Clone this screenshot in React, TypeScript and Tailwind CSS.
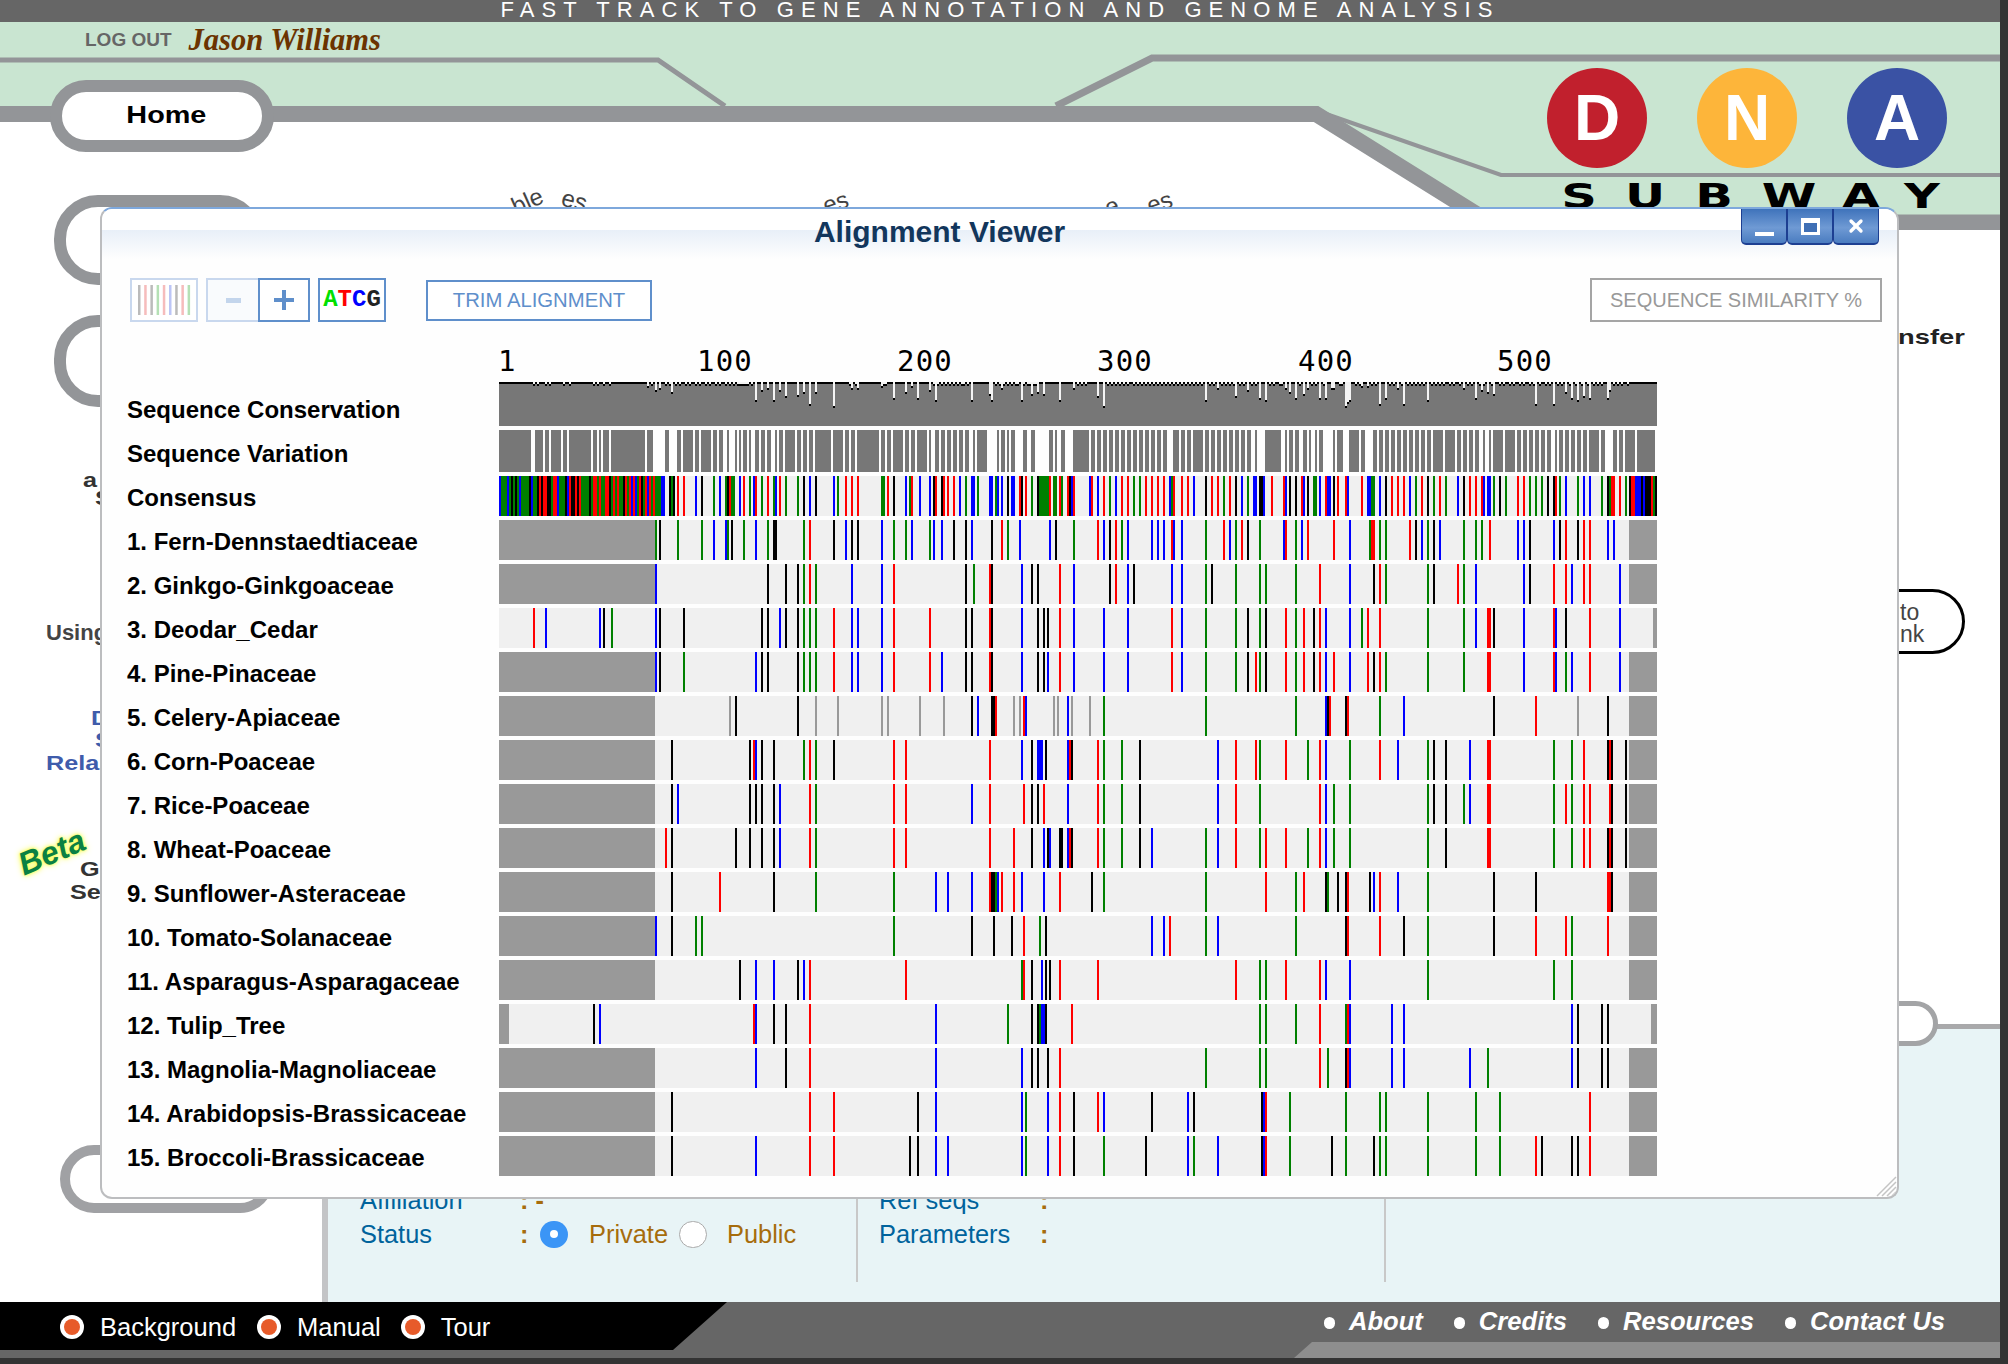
import { X } from "lucide-react";

const SANS = "font-['Liberation_Sans',Arial,sans-serif]";

const COLORS: Record<string, string> = { r: "#ff0000", g: "#008000", b: "#0000ff", k: "#000000", a: "#999999" };

const LABELS = [
  "Sequence Conservation",
  "Sequence Variation",
  "Consensus",
  "1. Fern-Dennstaedtiaceae",
  "2. Ginkgo-Ginkgoaceae",
  "3. Deodar_Cedar",
  "4. Pine-Pinaceae",
  "5. Celery-Apiaceae",
  "6. Corn-Poaceae",
  "7. Rice-Poaceae",
  "8. Wheat-Poaceae",
  "9. Sunflower-Asteraceae",
  "10. Tomato-Solanaceae",
  "11. Asparagus-Asparagaceae",
  "12. Tulip_Tree",
  "13. Magnolia-Magnoliaceae",
  "14. Arabidopsis-Brassicaceae",
  "15. Broccoli-Brassicaceae",
];

// one entry per species: gray columns at each end, then colored columns
const ROWS: { left: number; right: number; bars: string }[] = [
  { left: 78, right: 565, bars: "g78 k80 g89 g101 b107 b113 g114 k116 g122 b128 g134 k137 k138 g152 r155 k167 b173 k176 k179 b191 g197 g203 b206 g215 b217 b221 k227 k233 b236 k246 r251 g254 b260 b275 k278 g287 r299 b302 k305 r308 g311 b314 b326 b329 b332 r336 b337 b341 g353 r362 b365 g368 r371 k374 g380 b392 r393 g398 b401 r404 r417 b425 g435 r436 r437 g440 g443 r455 k458 b461 g464 k467 b470 g482 g488 g491 r495 b509 b512 k515 b527 k530 r533 k539 r542 r545 b554 b557" },
  { left: 78, right: 565, bars: "b78 k134 k143 k149 g152 r155 g158 b176 b191 r197 k233 g237 r245 k246 b261 k266 k269 r280 b287 k305 r308 b314 k317 b336 b341 g353 k356 g368 g380 g383 g398 r410 b425 k437 r440 g443 g464 k467 r479 g482 b488 b512 k515 r527 r533 b536 r542 r545 b560" },
  { left: 0, right: 577, bars: "r17 b23 b50 k52 g56 b78 k80 k92 k131 k134 b140 k143 k149 g152 g155 g158 r167 b176 b179 b191 r197 r215 k233 k236 r245 k246 b261 k269 k272 k274 r280 b287 b302 b314 r336 b341 g353 g368 k374 g380 k383 r393 g398 r402 k407 r410 b413 b425 g431 r434 r440 g464 g482 b488 r494 r495 k497 b512 r527 b528 k533 r545 b560" },
  { left: 78, right: 565, bars: "b78 k80 g92 b128 k131 k134 k149 g152 g155 g158 r167 b176 b179 b191 r197 r215 b221 k233 k236 r245 k246 b261 k269 k272 b274 r280 b287 b302 b314 r336 b341 g353 g368 k374 r378 g380 k383 r393 g398 r402 k407 r410 b413 r417 b425 r434 k437 r440 g443 g464 g482 r494 r495 b512 r527 b528 g533 b536 r545 b560" },
  { left: 78, right: 565, bars: "a115 k118 k149 a158 a169 a191 a194 a210 a222 k236 b239 k246 k247 r248 a257 a260 r262 b263 a277 a279 b284 a286 a295 g302 g353 g398 b413 k414 r415 k423 r424 g440 b452 k497 r518 a539 k554" },
  { left: 78, right: 565, bars: "k86 k125 r127 b128 k131 k137 g152 r155 g158 k167 r197 r203 r245 b261 k266 b269 b270 b271 k273 b284 r285 k286 r299 g302 g311 k320 b359 r368 r378 g380 r393 g404 r410 b413 g425 r440 b449 g464 k467 k473 b485 r494 r495 g527 g536 r542 k554 r555 k556 k563" },
  { left: 78, right: 565, bars: "k86 b89 k125 k128 k131 k137 b140 r155 g158 r197 r203 b236 r245 r262 k266 k269 r272 b284 r299 g302 g311 k320 b359 r368 g380 r410 b413 g417 g425 g464 k467 k473 g482 b485 r494 r495 g527 r533 g536 r542 r545 r555 k556 k563" },
  { left: 78, right: 565, bars: "r83 k86 k118 k125 k131 k137 b140 r155 g158 r197 r203 r245 r257 k266 b272 k274 b275 k280 k281 b284 r285 k286 r299 g302 g311 k320 b326 g353 b359 r368 g380 r383 r393 g404 r410 b413 g417 g425 g464 k473 r494 r495 g527 g536 r542 r545 k554 r555 k556 k563" },
  { left: 78, right: 565, bars: "k86 r110 k137 g158 g197 b218 b224 b236 r245 k246 k247 g248 b249 r251 r257 b261 b272 r280 k296 g302 g353 r383 g398 r402 k413 g414 k419 k423 r424 k435 b437 r440 b449 g464 k497 k518 r554 r555 k556" },
  { left: 78, right: 565, bars: "b78 k86 g98 g101 g197 k236 k247 k256 r262 g270 k273 b326 b332 r335 g353 b359 g398 k423 r424 r440 k452 g464 k497 r518 r533 g536 r554" },
  { left: 78, right: 565, bars: "k120 b128 b137 k149 b152 r155 r203 g261 r262 k266 b271 k273 k275 r280 r299 r368 g380 g383 r393 r410 b413 b425 g464 g527 g536" },
  { left: 5, right: 576, bars: "k47 b50 r127 b128 k137 k143 r155 b218 g254 k266 k269 g270 b271 b272 k273 r286 g380 g383 g398 r410 g423 r424 b425 b446 b452 b536 k539 k551 k554" },
  { left: 78, right: 565, bars: "b128 k143 r155 b218 b261 k266 k269 k274 r280 g353 g380 g383 r410 g414 k423 r424 b425 b446 b452 b485 g494 b536 k539 k551 k554" },
  { left: 78, right: 565, bars: "k86 r155 r167 k209 b218 b261 g263 b274 r280 k287 r299 b302 k326 b344 k347 k381 b382 r383 g395 g423 g440 g443 g464 g488 g500 r545" },
  { left: 78, right: 565, bars: "k86 b128 r155 r167 k205 k209 b218 b224 b261 g263 b274 r280 k287 g302 k323 b344 g347 b359 k381 b382 r383 g395 k416 g423 k437 g440 g443 g464 g488 g500 r518 k521 k536 k539 r545" },
];

const CONSENSUS_HEAD = "bgggbgkgkgbggggkbggkrkrrkkgrrbgggkbrkkrkrggggkgrrgrggrrkgrgrggkrgrbrbgrkgrbrgrgggbb";
const CONSENSUS = "k85 g86 k87 r89 r92 b98 k101 g107 b110 g113 k114 r115 g116 g117 b120 r122 g125 b127 r128 g131 r134 g137 b138 r140 g143 g149 k152 b155 k158 b167 g169 r173 r176 r179 g191 g192 r194 k197 b203 g205 r206 b210 b215 k217 r218 k221 r222 r224 r227 b230 g233 b236 b237 g239 b245 b246 g248 b249 b251 k254 b256 b257 r260 k261 r263 g266 k269 g270 g271 g272 g273 g274 r275 g277 g278 r280 g281 r284 k285 b286 r287 b295 r296 b299 r302 g305 b308 r311 r314 g317 g320 r323 r326 r329 r332 b335 g336 r337 r341 r344 b347 k353 r356 r359 g362 r365 k368 b371 g374 b377 b378 k380 k381 b382 r386 r392 b393 k395 k398 r401 b402 k404 g407 g408 b410 r413 b414 b415 k417 r419 r423 b424 r431 b434 b435 g436 g437 b440 k443 r446 r449 r452 b455 g458 r461 k464 g467 r470 g473 b479 k482 r485 r488 r491 b492 b494 b495 g497 k500 g503 r509 r512 g515 g518 g521 k524 k527 r528 g530 b533 g539 b542 b545 g551 k554 g555 r556 r557 r560 g563 k565 r566 r567 b568 b569 b570 k571 b572 k573 k574 k575 r576 g577 k578";

const VARIATION = "0-16 18-22 23-25 26-31 32-34 35-46 47-49 50-51 52-55 56-73 74-77 83-85 89-91 92-97 98-100 101-106 107-109 110-112 114-115 118-119 120-121 122-124 125-126 128-130 131-133 134-136 138-139 140-142 143-148 149-151 152-154 155-157 158-166 167-172 173-175 176-178 179-190 191-193 194-196 197-202 203-205 206-208 209-214 215-216 218-220 221-223 224-226 227-229 230-232 233-235 237-238 239-244 249-250 251-253 254-255 256-258 262-264 266-268 275-277 278-279 281-283 287-295 296-298 299-301 302-304 305-307 308-310 311-313 314-316 317-319 320-322 323-325 326-328 329-331 332-334 337-340 341-343 344-346 347-352 353-355 356-358 359-361 362-364 365-367 368-370 371-373 374-376 378-379 383-391 393-394 395-397 398-400 402-404 405-406 408-409 410-412 417-418 419-422 425-430 431-433 437-439 440-442 443-445 446-448 449-451 452-454 455-457 458-460 461-463 464-466 467-472 473-478 479-481 482-484 485-487 488-490 492-493 495-496 497-502 503-508 509-511 512-514 515-517 518-520 521-523 524-526 528-529 530-532 533-535 536-538 539-541 542-544 545-550 551-553 557-559 560-562 563-568 569-578";

const SMALL_DENTS = [17, 19, 23, 25, 32, 35, 47, 49, 52, 55, 76, 83, 85, 88, 90, 93, 95, 98, 100, 103, 105, 108, 110, 113, 115, 117, 119, 120, 121, 122, 123, 124, 126, 175, 178, 192, 193, 217, 219, 221, 223, 225, 227, 229, 231, 232, 234, 248, 250, 252, 254, 256, 258, 259, 262, 264, 265, 267, 268, 289, 291, 293, 304, 306, 308, 310, 312, 314, 317, 319, 321, 323, 325, 327, 329, 331, 333, 335, 337, 339, 341, 343, 345, 347, 349, 351, 355, 357, 361, 363, 365, 367, 370, 372, 376, 378, 385, 387, 390, 391, 400, 406, 408, 412, 420, 421, 428, 430, 436, 438, 445, 447, 451, 454, 456, 458, 460, 462, 466, 468, 470, 472, 475, 477, 480, 484, 486, 490, 492, 496, 500, 502, 505, 507, 510, 512, 515, 517, 520, 523, 525, 529, 531, 535, 538, 541, 544, 547, 549, 551, 557, 559, 561, 564];

const BIG_DENTS: Record<number, number> = {
  74: 4, 78: 8, 80: 6, 86: 10, 128: 18, 131: 8, 134: 6, 137: 18, 140: 8, 143: 14, 149: 13, 152: 10, 155: 22, 158: 10, 167: 24, 176: 6, 179: 6, 191: 4, 197: 16, 203: 10, 206: 4, 209: 16, 215: 8, 218: 18, 236: 18, 245: 12, 246: 18, 251: 6, 261: 18, 266: 12, 269: 10, 272: 12, 280: 18, 287: 6, 299: 14, 302: 24, 353: 18, 359: 6, 368: 14, 374: 8, 380: 16, 383: 18, 393: 6, 395: 10, 398: 16, 402: 12, 404: 6, 410: 16, 413: 16, 416: 6, 417: 6, 423: 24, 424: 20, 425: 18, 431: 4, 434: 4, 440: 22, 443: 16, 449: 6, 452: 22, 464: 18, 482: 6, 488: 16, 491: 8, 494: 10, 497: 12, 518: 22, 527: 22, 533: 10, 536: 16, 539: 18, 542: 14, 545: 16, 554: 16, 555: 8,
};

const COL = 2;
const TRACK_W = 1158;

function Bars({ bars, y }: { bars: string; y: number }) {
  return (
    <>
      {bars.split(" ").map((t, i) => (
        <rect key={i} x={Number(t.slice(1)) * COL} y={y} width={COL} height={40} fill={COLORS[t[0]]} />
      ))}
    </>
  );
}

function AlignmentTracks() {
  const dents = { ...Object.fromEntries(SMALL_DENTS.map((c) => [c, 2])), ...BIG_DENTS } as Record<number, number>;
  return (
    <svg width={TRACK_W} height={794} shapeRendering="crispEdges" className="shrink-0">
      {/* conservation */}
      <rect width={TRACK_W} height={44} fill="#777777" />
      {Array.from({ length: 579 }).map((_, c) => {
        const d = dents[c] ?? 0;
        return (
          <g key={c}>
            {d > 0 && <rect x={c * COL} y={0} width={COL} height={d} fill="#f4f4f4" />}
            <rect x={c * COL} y={d} width={COL} height={2} fill="#000" />
          </g>
        );
      })}
      {/* variation */}
      {VARIATION.split(" ").map((s, i) => {
        const [a, b] = s.split("-").map(Number);
        return <rect key={i} x={a * COL} y={48} width={(b - a) * COL} height={42} fill="#777777" />;
      })}
      {/* consensus */}
      <rect y={94} width={TRACK_W} height={40} fill="#f0f0f0" />
      {CONSENSUS_HEAD.split("").map((ch, i) => (
        <rect key={i} x={i * COL} y={94} width={COL} height={40} fill={COLORS[ch]} />
      ))}
      <Bars bars={CONSENSUS} y={94} />
      {/* species */}
      {ROWS.map((row, i) => {
        const y = 138 + i * 44;
        return (
          <g key={i}>
            <rect y={y} width={TRACK_W} height={40} fill="#f0f0f0" />
            <rect y={y} width={row.left * COL} height={40} fill="#999999" />
            <rect x={row.right * COL} y={y} width={(579 - row.right) * COL} height={40} fill="#999999" />
            <Bars bars={row.bars} y={y} />
          </g>
        );
      })}
    </svg>
  );
}

function BarcodeIcon() {
  const cols = ["#bbb", "#f6bcbc", "#bbb", "#b5e0b5", "#f6bcbc", "#bcc5f6", "#bbb", "#f6bcbc", "#b5e0b5"];
  return (
    <svg width="56" height="30">
      {cols.map((c, i) => (
        <rect key={i} x={2 + i * 6.2} y={0} width={2.5} height={30} fill={c} />
      ))}
    </svg>
  );
}

function WindowButtons() {
  const btn =
    "w-[46px] h-[36px] flex items-center justify-center rounded-b-[5px] border-x border-b-2 border-[#1d3f92] bg-[linear-gradient(to_bottom,#3f73bb,#6f9ad4_55%,#4a7cc0)]";
  return (
    <div className="absolute top-0 right-[18px] flex">
      <div className={btn + " items-end pb-[7px]"}>
        <div className="w-[19px] h-[4px] bg-white" />
      </div>
      <div className={btn}>
        <div className="w-[19px] h-[17px] border-[3px] border-white border-t-[5px] bg-[#3f6fb5]" />
      </div>
      <div className={btn}>
        <X className="w-[20px] h-[20px] text-white" strokeWidth={4} />
      </div>
    </div>
  );
}

function AlignmentModal() {
  return (
    <div className={SANS + " absolute left-[100px] top-[207px] w-[1799px] h-[992px] z-20 bg-[#fefefe] rounded-[12px] rounded-tr-[14px] border-2 border-[#bcbdbf] border-t-[#7ea8dc] flex flex-col overflow-hidden"}>
      <WindowButtons />
      <div className="h-[69px] shrink-0 bg-[linear-gradient(to_bottom,#fff_0,#fff_21px,#e8eff8_21px,#fefefe_50px)]">
        <div className="h-[46px] flex items-center justify-center pr-[120px]">
          <span className="text-[30px] font-bold text-[#12365c] leading-none">Alignment Viewer</span>
        </div>
      </div>

      <div className="flex h-[44px] shrink-0 pl-[28px]">
        <button type="button" className="w-[68px] h-[44px] border-2 border-[#c9d8ee] bg-white flex items-center justify-center">
          <BarcodeIcon />
        </button>
        <button type="button" className="ml-[8px] w-[52px] h-[44px] border-2 border-[#c9d8ee] border-r-0 bg-[#f9fbfd] text-[#bcd0e9] flex items-center justify-center">
          <div className="w-[15px] h-[5px] bg-[#c3d5ec]" />
        </button>
        <button type="button" className="w-[52px] h-[44px] border-2 border-[#5f8fcb] bg-white flex items-center justify-center">
          <svg width="22" height="22">
            <path d="M9 1h4v8h8v4h-8v8h-4v-8h-8v-4h8z" fill="#5f8fcb" />
          </svg>
        </button>
        <button type="button" className="ml-[8px] w-[68px] h-[44px] border-2 border-[#5f8fcb] bg-white flex items-center justify-center font-['Liberation_Mono',monospace] font-bold text-[24px] leading-none">
          <span className="text-[#00e000]">A</span>
          <span className="text-[#ff0000]">T</span>
          <span className="text-[#0000ff]">C</span>
          <span className="text-[#222]">G</span>
        </button>
        <button type="button" className="ml-[40px] mt-[2px] w-[226px] h-[41px] border-2 border-[#5f8fcb] bg-white text-[20.3px] text-[#5f8fcb] flex items-center justify-center pb-[1px]">
          TRIM ALIGNMENT
        </button>
        <button type="button" className="ml-auto mr-[15px] w-[292px] h-[44px] border-2 border-[#a5a5a5] bg-white text-[20px] text-[#999] flex items-center justify-center">
          SEQUENCE SIMILARITY %
        </button>
      </div>

      <div className="flex mt-[26px] h-[27px] shrink-0 pl-[396px] font-['DejaVu_Sans_Mono',monospace] text-[29px] leading-[27px] tracking-[1.2px] text-black">
        <span className="w-[199px]">1</span>
        <span className="w-[200px]">100</span>
        <span className="w-[200px]">200</span>
        <span className="w-[201px]">300</span>
        <span className="w-[199px]">400</span>
        <span>500</span>
      </div>

      <div className="flex mt-[7px] shrink-0">
        <div className="w-[397px] pl-[25px] pt-[6px] flex flex-col shrink-0">
          {LABELS.map((l) => (
            <div key={l} className="h-[44px] flex items-center text-[24px] font-bold text-black whitespace-nowrap">
              {l}
            </div>
          ))}
        </div>
        <AlignmentTracks />
      </div>

      <div className="absolute right-0 bottom-0 w-[22px] h-[22px]">
        <svg width="22" height="22" stroke="#c4c4c4" strokeWidth="1.5">
          <path d="M2 21 21 2M7 21 21 7M12 21 21 12M17 21 21 17" />
        </svg>
      </div>
    </div>
  );
}

function HeaderArt() {
  return (
    <svg className="absolute inset-0 w-full h-full" viewBox="0 22 2000 208" preserveAspectRatio="none">
      <rect x="0" y="22" width="2000" height="208" fill="#c9e5d1" />
      <path d="M0 114H1316L1490 222.5V230H0Z" fill="#fff" />
      <path d="M0 60H658L725 106" fill="none" stroke="#939598" strokeWidth="5" />
      <path d="M1056 106 1152 58H2000" fill="none" stroke="#939598" strokeWidth="7" />
      <path d="M1309 108 1501 175H2000" fill="none" stroke="#939598" strokeWidth="4" />
      <path d="M0 114H1316L1490 222.5H2000" fill="none" stroke="#939598" strokeWidth="16" />
      <g fill="#444" fontSize="24" fontFamily="Liberation Sans, sans-serif">
        <text x="516" y="215" transform="rotate(-24 516 215)">ble</text>
        <text x="560" y="205" transform="rotate(15 560 205)">es</text>
        <text x="826" y="214" transform="rotate(-18 826 214)">es</text>
        <text x="1108" y="216" transform="rotate(-18 1108 216)">e</text>
        <text x="1150" y="214" transform="rotate(-18 1150 214)">es</text>
      </g>
    </svg>
  );
}

function DnaLogo() {
  const circles = [
    { l: "D", c: "bg-[#c1202d]" },
    { l: "N", c: "bg-[#fdb53a]" },
    { l: "A", c: "bg-[#3a52a4]" },
  ];
  const subway = [
    { l: "S", w: "w-[66px]" },
    { l: "U", w: "w-[66px]" },
    { l: "B", w: "w-[72px]" },
    { l: "W", w: "w-[78px]" },
    { l: "A", w: "w-[66px]" },
    { l: "Y", w: "w-[56px]" },
  ];
  return (
    <div className="relative w-[404px] mr-[50px] pt-[46px] flex flex-col">
      <div className="flex gap-[50px] pl-[1px]">
        {circles.map((c) => (
          <div key={c.l} className={c.c + " w-[100px] h-[100px] rounded-full flex items-center justify-center text-white font-bold text-[64px] leading-none " + SANS}>
            {c.l}
          </div>
        ))}
      </div>
      <div className="flex mt-[14px] font-['DejaVu_Sans',sans-serif] font-bold text-[33px] leading-[30px] text-black">
        {subway.map((s) => (
          <span key={s.l} className={s.w + " text-center inline-block scale-x-150"}>
            {s.l}
          </span>
        ))}
      </div>
    </div>
  );
}

function Header() {
  return (
    <div className={SANS + " relative h-[208px] shrink-0 flex justify-between"}>
      <HeaderArt />
      <div className="relative flex flex-col">
        <div className="h-[36px] flex items-center pl-[85px]">
          <span className="text-[19px] font-bold text-[#666]">LOG OUT</span>
          <span className="ml-[17px] font-['Liberation_Serif',serif] font-bold italic text-[30.5px] text-[#6b3300] leading-none">
            Jason Williams
          </span>
        </div>
        <div className="ml-[50px] mt-[22px] w-[224px] h-[72px] rounded-[36px] border-[12px] border-[#939598] bg-white flex items-center justify-center pl-[8px] pb-[2px]">
          <span className="text-[24px] font-bold text-black inline-block scale-x-120">Home</span>
        </div>
      </div>
      <DnaLogo />
    </div>
  );
}

function LeftFragments() {
  const frag = "font-bold origin-left scale-x-120 text-[21px] whitespace-nowrap";
  return (
    <div className="relative -mt-[35px] w-[300px] flex flex-col items-start">
      <div className="ml-[54px] w-[210px] h-[90px] rounded-[44px] border-[12px] border-[#939598]" />
      <div className="ml-[54px] mt-[30px] w-[210px] h-[92px] rounded-[44px] border-[12px] border-[#939598]" />
      <div className={"ml-[83px] mt-[64px] leading-[18px] text-[#333] " + frag}>a</div>
      <div className={"ml-[95px] leading-[18px] text-[#333] " + frag}>S</div>
      <div className="ml-[46px] mt-[114px] leading-[24px] text-[#444] font-bold text-[22px] whitespace-nowrap">Using</div>
      <div className={"ml-[91px] mt-[62px] leading-[22px] text-[#3f5cab] " + frag}>D</div>
      <div className={"ml-[95px] leading-[22px] text-[#3f5cab] " + frag}>S</div>
      <div className={"ml-[46px] mt-[1px] leading-[22px] text-[#3f5cab] " + frag}>Rela</div>
      <div className={"ml-[80px] mt-[84px] leading-[22px] text-[#333] " + frag}>G</div>
      <div className={"ml-[70px] mt-[1px] h-[22px] leading-[22px] text-[#333] " + frag}>Se</div>
      <span className="absolute left-[17px] top-[641px] -rotate-[23deg] italic font-bold text-[32px] leading-none text-[#0a8044] [text-shadow:0_0_6px_#f6ff3a,0_0_3px_#f6ff3a]">
        Beta
      </span>
    </div>
  );
}

function RightFragments() {
  return (
    <div className="relative flex flex-col items-end pr-[35px]">
      <div className="mt-[95px] leading-[24px] text-[21px] font-bold text-[#222] origin-right scale-x-130">Transfer</div>
      <div className="mt-[240px] w-[165px] h-[65px] shrink-0 rounded-r-[33px] border-[3px] border-black pl-[97px] pt-[2px] flex flex-col justify-center text-[23px] leading-[22px] text-[#444]">
        <span>to</span>
        <span>nk</span>
      </div>
      <div className="relative z-10 mt-[347px] mr-[27px] w-[140px] h-[45px] shrink-0 rounded-r-[23px] border-[5px] border-[#a3a4a6] bg-white" />
    </div>
  );
}

function InfoPanel() {
  const label = "text-[#00639c]";
  const colon = "w-[20px] text-[#a66c0c] font-bold whitespace-nowrap";
  return (
    <div className={SANS + " flex-1 border-l-[6px] border-t-[5px] border-l-[#c3c4c6] border-t-[#a9a9ab] bg-[#e8f4f6] flex text-[25.4px]"}>
      <div className="w-[530px] h-[253px] border-r-2 border-[#c8c8c8] pl-[32px] pt-[154px]">
        <div className="h-[34px] flex items-center">
          <span className={label + " w-[160px]"}>Affiliation</span>
          <span className={colon}>: -</span>
        </div>
        <div className="h-[34px] flex items-center">
          <span className={label + " w-[160px]"}>Status</span>
          <span className={colon}>:</span>
          <span className="w-[28px] h-[27px] rounded-full bg-[#3b95f6] flex items-center justify-center">
            <span className="w-[8px] h-[8px] rounded-full bg-white" />
          </span>
          <span className="ml-[21px] text-[#a66c0c]">Private</span>
          <span className="ml-[11px] w-[28px] h-[27px] rounded-full bg-white border border-[#aaa]" />
          <span className="ml-[20px] text-[#a66c0c]">Public</span>
        </div>
      </div>
      <div className="w-[528px] h-[253px] border-r-2 border-[#c8c8c8] pl-[21px] pt-[154px]">
        <div className="h-[34px] flex items-center">
          <span className={label + " w-[161px]"}>Ref seqs</span>
          <span className={colon}>:</span>
        </div>
        <div className="h-[34px] flex items-center">
          <span className={label + " w-[161px]"}>Parameters</span>
          <span className={colon}>:</span>
        </div>
      </div>
    </div>
  );
}

function Footer() {
  const items = [
    { t: "Background", cls: "mr-[21px]" },
    { t: "Manual", cls: "mr-[20px]" },
    { t: "Tour", cls: "" },
  ];
  const links = ["About", "Credits", "Resources", "Contact Us"];
  return (
    <div className={SANS + " relative h-[56px] shrink-0 flex justify-between"}>
      <svg className="absolute inset-0 w-full h-full" viewBox="0 0 2000 56" preserveAspectRatio="none">
        <rect width="2000" height="56" fill="#666666" />
        <path d="M0 0H727L673 48H0Z" fill="#000" />
        <path d="M1312 40H2000V56H1294Z" fill="#8e8e8e" />
      </svg>
      <div className="relative h-[50px] pl-[60px] flex items-center">
        {items.map((it) => (
          <div key={it.t} className={"flex items-center " + it.cls}>
            <span className="w-[24px] h-[24px] rounded-full bg-white flex items-center justify-center">
              <span className="w-[16px] h-[16px] rounded-full bg-[#e75b2a]" />
            </span>
            <span className="ml-[16px] text-[25.5px] text-white">{it.t}</span>
          </div>
        ))}
      </div>
      <div className="relative h-[38px] pr-[55px] flex items-center gap-[31px]">
        {links.map((l) => (
          <div key={l} className="flex items-center gap-[14px]">
            <span className="w-[11px] h-[12px] mt-[4px] rounded-full bg-white" />
            <span className="text-[25.6px] font-bold italic text-white">{l}</span>
          </div>
        ))}
      </div>
    </div>
  );
}

export default function App() {
  return (
    <div className="w-[2008px] h-[1364px] bg-[#333] overflow-hidden">
      <div className="relative w-[2000px] h-[1358px] bg-white flex flex-col overflow-hidden">
        <div className={SANS + " h-[22px] shrink-0 bg-[#666] overflow-hidden flex items-end justify-center"}>
          <span className="text-[22px] leading-[18px] tracking-[7.1px] text-white whitespace-nowrap pb-[3px]">
            FAST TRACK TO GENE ANNOTATION AND GENOME ANALYSIS
          </span>
        </div>
        <Header />
        <div className={SANS + " h-[794px] shrink-0 flex justify-between"}>
          <LeftFragments />
          <RightFragments />
        </div>
        <div className="flex flex-1">
          <div className="w-[322px] shrink-0 pt-[121px]">
            <div className="ml-[60px] w-[214px] h-[68px] rounded-[34px] border-[10px] border-[#a0a1a4]" />
          </div>
          <InfoPanel />
        </div>
        <Footer />
        <AlignmentModal />
      </div>
    </div>
  );
}
